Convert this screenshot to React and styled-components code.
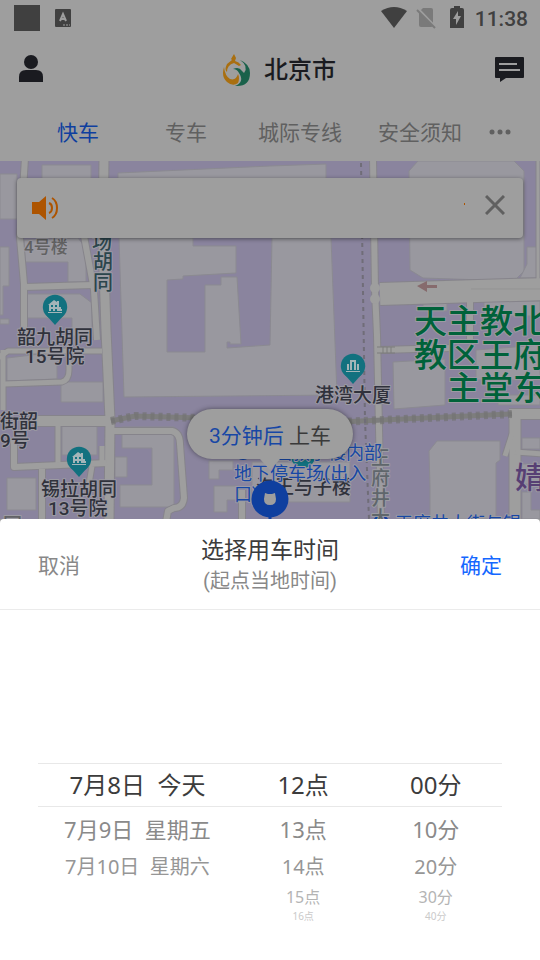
import styled, { createGlobalStyle } from 'styled-components'

const GlobalStyle = createGlobalStyle`
  * {
    box-sizing: border-box;
  }
  body {
    margin: 0;
    background: #9e9e9e;
    font-family: Roboto, "Noto Sans CJK SC", sans-serif;
  }
  button {
    padding: 0;
    border: 0;
    background: none;
    font: inherit;
    color: inherit;
    cursor: pointer;
  }
`

const Page = styled.div`
  display: flex;
  flex-direction: column;
  min-height: 100vh;
  background: #9e9e9e;
`

const StatusBar = styled.div`
  display: flex;
  align-items: center;
  justify-content: space-between;
  height: 36px;
  padding: 0 12px 0 14px;
  color: #404040;
`

const StatusGroup = styled.div`
  display: flex;
  align-items: center;
  gap: ${({ $gap }) => $gap}px;
`

const AppSquare = styled.span`
  width: 26px;
  height: 26px;
  background: #404040;
`

const Clock = styled.time`
  padding-top: 2px;
  font-size: 21px;
  font-weight: 500;
  line-height: 36px;
`

const TitleBar = styled.header`
  display: grid;
  grid-template-columns: 1fr auto 1fr;
  align-items: center;
  height: 66px;
  padding: 0 16px 0 18px;
  color: #1a1b20;
`

const IconButton = styled.button`
  display: flex;
  justify-self: ${({ $side }) => $side};
`

const City = styled.h1`
  display: flex;
  align-items: center;
  gap: 12px;
  margin: 0;
  padding: 2px 0 0 16px;
  font-size: 24px;
  font-weight: 500;
  line-height: 36px;
`

const Tabs = styled.nav`
  display: grid;
  grid-template-columns: 27fr 27fr 30fr 30fr 10fr;
  align-items: center;
  justify-items: center;
  height: 59px;
  padding: 2px 20px 0 24px;
`

const Tab = styled.button`
  font-size: 21px;
  line-height: 32px;
  white-space: nowrap;
  color: ${({ $active }) => ($active ? '#0f3f9f' : '#606060')};
`

const MoreButton = styled.button`
  display: flex;
  padding-bottom: 2px;
`

const MapArea = styled.main`
  position: relative;
  flex: 1;
  min-height: 358px;
  overflow: hidden;
  background: #8a849e;
`

const MapDrawing = styled.svg`
  position: absolute;
  inset: 0;
  width: 100%;
  height: 100%;
`

const Notice = styled.div`
  position: relative;
  display: flex;
  align-items: center;
  height: 60px;
  margin: 17px;
  padding: 0 18px 0 14px;
  border-radius: 4px;
  background: #9e9e9e;
  box-shadow: 0 1px 4px rgba(0, 0, 0, 0.45);
`

const NoticeTicker = styled.span`
  width: 1px;
  height: 2px;
  margin: 0 20px 8px auto;
  background: #ad5400;
`

const CloseButton = styled.button`
  display: flex;
  padding-bottom: 6px;
`

const Pickup = styled.div`
  position: absolute;
  top: 248px;
  left: 50%;
  display: flex;
  flex-direction: column;
  align-items: center;
  transform: translateX(-50%);
`

const PickupButton = styled.button`
  height: 50px;
  padding: 4px 22px 0;
  border-radius: 25px;
  background: #9e9e9e;
  box-shadow: 0 0 5px rgba(0, 0, 0, 0.45);
  color: #3a3a3a;
  font-size: 21px;
  line-height: 46px;
  white-space: nowrap;
`

const Minutes = styled.span`
  color: #1747a5;
`

const Sheet = styled.section`
  background: #fff;
  border-radius: 4px 4px 0 0;
`

const SheetHeader = styled.div`
  display: grid;
  grid-template-columns: 1fr auto 1fr;
  align-items: center;
  height: 91px;
  padding: 4px 38px 0;
  border-bottom: 1px solid #ebebeb;
`

const SheetAction = styled.button`
  justify-self: ${({ $side }) => $side};
  font-size: 21px;
  line-height: 32px;
  color: ${({ $primary }) => ($primary ? '#1467ff' : '#888')};
`

const SheetTitle = styled.h2`
  margin: 0;
  font-size: 23px;
  font-weight: 400;
  line-height: 30px;
  color: #3c3c3c;
  text-align: center;
`

const SheetHint = styled.p`
  margin: 0;
  font-size: 20px;
  line-height: 30px;
  color: #888;
  text-align: center;
`

const Wheels = styled.div`
  display: grid;
  grid-template-columns: 3fr 2fr 2fr;
  height: 350px;
  padding: 153px 38px 0;
  font-family: "Noto Sans", "Noto Sans CJK SC", sans-serif;
`

const Wheel = styled.div`
  display: flex;
  flex-direction: column;
`

const depths = [
  { height: 44, size: 24, color: '#3c3c3c' },
  { height: 43, size: 22, color: '#8a8a8a' },
  { height: 34, size: 20, color: '#969696' },
  { height: 26, size: 16, color: '#b4b4b4' },
  { height: 12, size: 10, color: '#cacaca' },
]

const Option = styled.button`
  height: ${({ $depth }) => depths[$depth].height}px;
  border-style: solid;
  border-color: #e8e8e8;
  border-width: ${({ $depth }) => ($depth === 0 ? '1px 0' : '0')};
  font-size: ${({ $depth }) => depths[$depth].size}px;
  line-height: 1;
  color: ${({ $depth }) => depths[$depth].color};
  white-space: pre;
`

const wheels = [
  { label: '日期', options: ['7月8日  今天', '7月9日  星期五', '7月10日  星期六'] },
  { label: '小时', options: ['12点', '13点', '14点', '15点', '16点'] },
  { label: '分钟', options: ['00分', '10分', '20分', '30分', '40分'] },
]

const tabs = ['快车', '专车', '城际专线', '安全须知']

const buildings = [
  'M42 165H91V200H42z',
  'M0 174H17V219H0z',
  'M118 173L270 166L326 164V190H118z',
  'M409 171L418 161H514L524 171V271L514 281L423 278L410 270z',
  'M24 240L78 238L86 248V282H68V262H25z',
  'M0 247H9V286H3V315H0z',
  'M0 319H9V324H0z',
  'M27 294H80L92 303V336H72V318H26z',
  'M119 238H193V246H236V273L183 276V279L167 280V352H205V285H221V277H237L241 344H230V342H227V348L270 345L272 238H331L337 395L124 397z',
  'M7 358L57 352V379L7 381z',
  'M61 382H103V402H61z',
  'M62 423H97V455H62z',
  'M7 478H36V510H7z',
  'M122 427H174V507H120V485H152V448H122z',
  'M115 457H127V477H115z',
  'M209 461H233V470H219V479H209z',
  'M214 486H237V500H227V512H214z',
  'M252 462H350V502H252z',
  'M423 301L447 299V311H423z',
  'M393 362L445 359V405L394 409z',
  'M430 488L429 451L437 441H500V460L496 463V519H430z',
  'M522 438H540V449H522z',
  'M522 464H540V484H522z',
  'M522 492H531V510H540V519H522z',
  'M484 301H540V316H484z',
  'M476 350L540 345V380H476z',
  'M498 395H540V405H498z',
  'M536 247H540V278H520L527 264V247z',
]

const roads = [
  { d: 'M25 158L20 238L24 284L24 345', w: 6 },
  { d: 'M25 287L92 285', w: 6 },
  { d: 'M84 236L94 290L97 340', w: 6 },
  { d: 'M104 158L103 240L106 330L110 420L109 522', w: 9 },
  { d: 'M-2 358L8 351L102 351', w: 5 },
  { d: 'M3 350V410', w: 5 },
  { d: 'M4 384L62 382Q69 380 69 370V352', w: 5 },
  { d: 'M36 421H110', w: 10 },
  { d: 'M58 422V465', w: 5 },
  { d: 'M14 440V467L107 463', w: 6 },
  { d: 'M42 469V522', w: 6 },
  { d: 'M102 446V463', w: 5 },
  { d: 'M92 466L88 490', w: 5 },
  { d: 'M112 431H172Q180 433 180 444L184 498Q183 508 174 508L168 511L166 522', w: 6 },
  { d: 'M373 158L375 290L377 335L381 522', w: 6 },
  { d: 'M380 350L450 348', w: 6 },
  { d: 'M470 300V340', w: 6 },
  { d: 'M538 158V280', w: 3 },
  { d: 'M380 294L545 289', w: 22 },
  { d: 'M509 414H545', w: 10 },
  { d: 'M515 414V522', w: 11 },
  { d: 'M512 434L505 456', w: 5 },
  { d: 'M515 452L545 454', w: 5 },
  { d: 'M242 490V522', w: 6 },
]

const mapLabels = [
  { text: '4号楼', x: 24, y: 253, size: 17, color: '#626262' },
  { text: '场', x: 92, y: 249, size: 20, color: '#2b454c' },
  { text: '胡', x: 93, y: 269, size: 20, color: '#2b454c' },
  { text: '同', x: 93, y: 290, size: 20, color: '#2b454c' },
  { text: '韶九胡同', x: 17, y: 344, size: 19, color: '#30323c' },
  { text: '15号院', x: 25, y: 363, size: 19, color: '#30323c' },
  { text: '街韶', x: 0, y: 428, size: 19, color: '#30323c' },
  { text: '9号', x: 0, y: 447, size: 19, color: '#30323c' },
  { text: '锡拉胡同', x: 41, y: 496, size: 19, color: '#30323c' },
  { text: '13号院', x: 48, y: 515, size: 19, color: '#30323c' },
  { text: '园', x: 3, y: 532, size: 19, color: '#626266' },
  { text: '港湾大厦', x: 315, y: 402, size: 19, color: '#30323c' },
  { text: '天主教北', x: 414, y: 333, size: 33, color: '#00623a' },
  { text: '教区王府', x: 414, y: 367, size: 33, color: '#00623a' },
  { text: '主堂东', x: 447, y: 400, size: 33, color: '#00623a' },
  { text: '婧', x: 515, y: 488, size: 30, color: '#573f74' },
  { text: '王', x: 371, y: 465, size: 19, color: '#5f666b' },
  { text: '府', x: 371, y: 485, size: 19, color: '#5f666b' },
  { text: '井', x: 371, y: 505, size: 19, color: '#5f666b' },
  { text: '大', x: 371, y: 525, size: 19, color: '#5f666b' },
  { text: '海王与子楼', x: 256, y: 494, size: 19, color: '#30323c' },
  { text: '中国教学楼内部', x: 256, y: 459, size: 18, color: '#1747a5', light: true },
  { text: '地下停车场(出入', x: 234, y: 480, size: 18, color: '#1747a5', light: true },
  { text: '口)', x: 234, y: 501, size: 18, color: '#1747a5', light: true },
  { text: '王府井大街与锡', x: 395, y: 530, size: 18, color: '#1747a5', light: true },
]

function PlacePin({ x, y, children }) {
  return (
    <g transform={`translate(${x} ${y})`}>
      <path d="M-8 9L0 18L8 9z" fill="#12717f" />
      <circle r="12.2" fill="#12717f" />
      <g fill="#a3b5b8">{children}</g>
    </g>
  )
}

function HousePin({ x, y }) {
  return (
    <PlacePin x={x} y={y}>
      <path fillRule="evenodd" d="M-7 -2L-1 -7L2 -5V-6H4V4H-6V-2zM-4 -2V0H-2V-2zM0 -2V0H2V-2zM-4 2V4H-2V2zM0 2V4H2V2z" />
      <path d="M4 0H6V2H7V4H4zM-7 5H7V6H-7z" />
    </PlacePin>
  )
}

function CityMap() {
  return (
    <MapDrawing viewBox="0 161 540 358" preserveAspectRatio="xMidYMid slice">
      <rect y="161" width="540" height="358" fill="#8a849e" />
      <g fill="#99989f" stroke="#8b8a91">
        {buildings.map((d) => (
          <path key={d} d={d} />
        ))}
      </g>
      <g fill="none" stroke="#86848b" strokeLinejoin="round">
        {roads.map((r) => (
          <path key={r.d} d={r.d} strokeWidth={r.w + 2} />
        ))}
      </g>
      <g fill="none" stroke="#9e9e9e" strokeLinejoin="round">
        {roads.map((r) => (
          <path key={r.d} d={r.d} strokeWidth={r.w} />
        ))}
      </g>
      <circle cx="375" cy="288" r="5" fill="#9e9e9e" />
      <circle cx="375" cy="299" r="5" fill="#9e9e9e" />
      <g fill="none" stroke="#7d7d7d">
        <path d="M111 421L135 416L200 418M340 422L512 414" strokeWidth="5" />
        <path d="M111 421L135 416L200 418M340 422L512 414" stroke="#747474" strokeWidth="8" strokeDasharray="4 4" opacity="0.7" />
        <path d="M361 163L365 420L369 519" stroke="#706d78" strokeDasharray="4 4" strokeWidth="2" />
        <path d="M377 347H395M377 353H395M383 347V353M387 347V353M391 347V353" />
        <path d="M471 289H540" stroke="#939393" />
      </g>
      <path d="M417 286L427 281V285H437V288H427V292z" fill="#866b6d" />

      <HousePin x={55} y={307} />
      <HousePin x={79} y={459} />
      <PlacePin x={353} y={366}>
        <path fillRule="evenodd" d="M-3 -6H3V4H-3zM-1 -4V4H1V-4zM-6 -2H-4V4H-6zM4 -2H6V4H4zM-7 5H7V6H-7z" />
      </PlacePin>
      <circle cx="303" cy="456" r="12" fill="#12717f" />
      <circle cx="243" cy="452" r="8" fill="#0f3f9f" />
      <circle cx="381" cy="523" r="8" fill="#0f3f9f" />

      <g stroke="#9c9ba3" strokeWidth="2" strokeLinejoin="round" paintOrder="stroke">
        {mapLabels.map((l) => (
          <text key={l.text} x={l.x} y={l.y} fontSize={l.size} fontWeight={l.light ? 400 : 500} fill={l.color}>
            {l.text}
          </text>
        ))}
      </g>
    </MapDrawing>
  )
}

function StatusIcons() {
  return (
    <svg width="84" height="26" viewBox="0 0 84 26" aria-hidden="true">
      <path d="M0 6Q13 -2 26 6L13 23z" fill="#404040" />
      <path d="M42 3H50Q52 3 52 5V20Q52 22 50 22H40Q38 22 38 20V7z" fill="#7a7a7a" />
      <path d="M36 3L56 24" stroke="#9e9e9e" strokeWidth="3" />
      <path d="M36 5L54 23" stroke="#7a7a7a" strokeWidth="2" />
      <path d="M73 1H79V3H81Q83 3 83 5V23H69V5Q69 3 71 3H73z" fill="#404040" />
      <path d="M77 6L72 14H75V20L80 11H77z" fill="#9e9e9e" />
    </svg>
  )
}

function CityLogo() {
  return (
    <svg width="30" height="36" viewBox="0 0 30 36" aria-hidden="true">
      <path d="M12 2L14 6L13 9Q17 10 19 13L17 14L12 11Q5 13 5 20Q2 18 5 12L10 8L9 7z" fill="#a96f10" />
      <path d="M2 15Q-1 25 5 30Q11 35 16 31Q18 26 16 22Q14 29 8 27Q3 24 2 15z" fill="#a96f10" />
      <path d="M18 8Q28 12 28 21Q28 35 13 34Q23 30 17 21Q15 17 11 17Q17 14 20 19L22 21Q27 14 18 8z" fill="#19614a" />
    </svg>
  )
}

function App() {
  return (
    <Page>
      <GlobalStyle />
      <StatusBar>
        <StatusGroup $gap={15}>
          <AppSquare />
          <svg width="16" height="18" viewBox="0 0 16 18" aria-hidden="true">
            <rect width="16" height="18" rx="1" fill="#404040" />
            <path d="M5 12L8 5L11 12M6 10H10" fill="none" stroke="#9e9e9e" strokeWidth="2" />
            <path d="M8 16H15" stroke="#9e9e9e" strokeDasharray="2 1" />
          </svg>
        </StatusGroup>
        <StatusGroup $gap={10}>
          <StatusIcons />
          <Clock>11:38</Clock>
        </StatusGroup>
      </StatusBar>

      <TitleBar>
        <IconButton $side="start" aria-label="个人中心">
          <svg width="26" height="28" viewBox="0 0 26 28">
            <circle cx="13" cy="7" r="7" fill="currentColor" />
            <path d="M1 27V22Q1 15 8 15H18Q25 15 25 22V27z" fill="currentColor" />
          </svg>
        </IconButton>
        <City>
          <CityLogo />
          北京市
        </City>
        <IconButton $side="end" aria-label="消息">
          <svg width="29" height="25" viewBox="0 0 29 25">
            <path d="M1 0H28Q29 0 29 1V20Q29 21 28 21H11L5 25V21H1Q0 21 0 20V1Q0 0 1 0z" fill="currentColor" />
            <path d="M4 7H22M4 13H25" stroke="#9e9e9e" strokeWidth="2" />
          </svg>
        </IconButton>
      </TitleBar>

      <Tabs>
        {tabs.map((name, i) => (
          <Tab key={name} $active={i === 0}>{name}</Tab>
        ))}
        <MoreButton aria-label="更多">
          <svg width="22" height="6" viewBox="0 0 22 6" fill="#606060">
            <circle cx="3" cy="3" r="2.5" />
            <circle cx="11" cy="3" r="2.5" />
            <circle cx="19" cy="3" r="2.5" />
          </svg>
        </MoreButton>
      </Tabs>

      <MapArea>
        <CityMap />
        <Notice>
          <svg width="28" height="26" viewBox="0 0 28 26" aria-hidden="true">
            <path d="M1 7H8L15 1V25L8 19H1z" fill="#ad5400" />
            <path d="M18 8Q21 9 21 13Q21 17 18 18M21 3Q26 6 26 13Q26 20 21 23" fill="none" stroke="#ad5400" strokeWidth="2" />
          </svg>
          <NoticeTicker />
          <CloseButton aria-label="关闭">
            <svg width="20" height="20" viewBox="0 0 20 20">
              <path d="M1 1L19 19M19 1L1 19" stroke="#606060" strokeWidth="3" />
            </svg>
          </CloseButton>
        </Notice>
        <Pickup>
          <PickupButton>
            <Minutes>3分钟后</Minutes> 上车
          </PickupButton>
          <svg width="38" height="62" viewBox="0 0 38 62" aria-hidden="true">
            <path d="M9 0H29L19 11z" fill="#9e9e9e" />
            <path d="M19 56V62" stroke="#0f3f9f" strokeWidth="3" />
            <circle cx="19" cy="40" r="18.5" fill="#0f3f9f" />
            <path d="M14 34L17 35H21L24 34L25 40Q25 46 19 46Q13 46 13 40z" fill="#9e9e9e" />
          </svg>
        </Pickup>
      </MapArea>

      <Sheet role="dialog" aria-labelledby="sheet-title">
        <SheetHeader>
          <SheetAction $side="start">取消</SheetAction>
          <div>
            <SheetTitle id="sheet-title">选择用车时间</SheetTitle>
            <SheetHint>(起点当地时间)</SheetHint>
          </div>
          <SheetAction $side="end" $primary>确定</SheetAction>
        </SheetHeader>
        <Wheels>
          {wheels.map((wheel) => (
            <Wheel key={wheel.label} role="listbox" aria-label={wheel.label}>
              {wheel.options.map((text, i) => (
                <Option key={text} role="option" aria-selected={i === 0} $depth={i}>
                  {text}
                </Option>
              ))}
            </Wheel>
          ))}
        </Wheels>
      </Sheet>
    </Page>
  )
}

export default App
